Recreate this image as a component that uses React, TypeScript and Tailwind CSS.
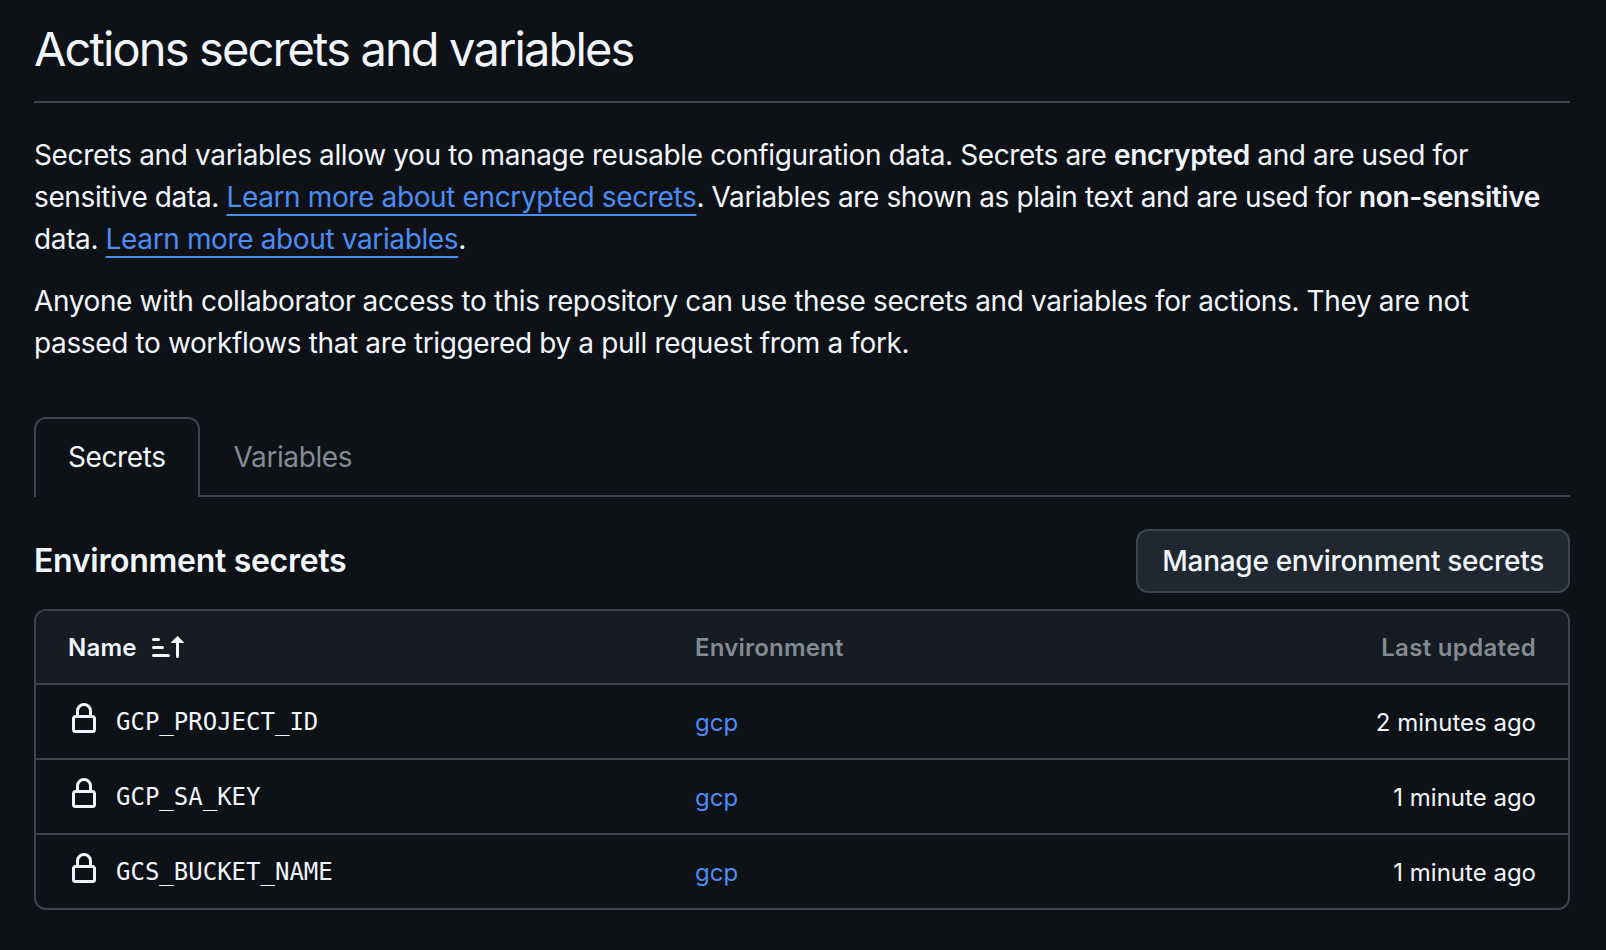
const secrets = [
  { name: 'GCP_PROJECT_ID', updated: '2 minutes ago' },
  { name: 'GCP_SA_KEY', updated: '1 minute ago' },
  { name: 'GCS_BUCKET_NAME', updated: '1 minute ago' },
];

function LockIcon() {
  return (
    <svg viewBox="0 0 16 16" width="32" height="32" fill="currentColor" className="shrink-0 -mt-[6px]">
      <path d="M4 4a4 4 0 0 1 8 0v2h.25c.966 0 1.75.784 1.75 1.75v5.5A1.75 1.75 0 0 1 12.25 15h-8.5A1.75 1.75 0 0 1 2 13.25v-5.5C2 6.784 2.784 6 3.75 6H4Zm8.25 3.5h-8.5a.25.25 0 0 0-.25.25v5.5c0 .138.112.25.25.25h8.5a.25.25 0 0 0 .25-.25v-5.5a.25.25 0 0 0-.25-.25ZM10.5 6V4a2.5 2.5 0 1 0-5 0v2Z" />
    </svg>
  );
}

function SortIcon() {
  return (
    <svg viewBox="0 0 16 16" width="32" height="32" fill="currentColor" className="shrink-0">
      <path d="m12.927 2.573 3 3A.25.25 0 0 1 15.75 6H13.5v6.75a.75.75 0 0 1-1.5 0V6H9.75a.25.25 0 0 1-.177-.427l3-3a.25.25 0 0 1 .354 0ZM0 12.25a.75.75 0 0 1 .75-.75h7.5a.75.75 0 0 1 0 1.5H.75a.75.75 0 0 1-.75-.75Zm0-4a.75.75 0 0 1 .75-.75h4.5a.75.75 0 0 1 0 1.5H.75A.75.75 0 0 1 0 8.25Zm0-4a.75.75 0 0 1 .75-.75h2.5a.75.75 0 0 1 0 1.5H.75A.75.75 0 0 1 0 4.25Z" />
    </svg>
  );
}

function DocLink({ children }: { children: string }) {
  return <a className="text-[#4c8cf5] underline underline-offset-[7px] decoration-2 [text-decoration-skip-ink:none]">{children}</a>;
}

export default function App() {
  return (
    <div className="min-h-[950px] bg-[#0e1116] pl-[34px] pr-[36px] text-[#f0f6fc] font-['Inter',sans-serif] overflow-hidden">
      {/* Header */}
      <div className="h-[103px] border-b-2 border-[#3d444d] pt-[19px]">
        <h1 className="text-[47px] leading-[60px] tracking-[-1.87px]">Actions secrets and variables</h1>
      </div>

      <p className="mt-[31px] text-[28px] leading-[42px] tracking-[-0.37px]">
        Secrets and variables allow you to manage reusable configuration data. Secrets are <b className="font-semibold">encrypted</b> and are used for
        <br />
        sensitive data. <DocLink>Learn more about encrypted secrets</DocLink>. Variables are shown as plain text and are used for <b className="font-semibold whitespace-nowrap">non-sensitive</b>
        <br />
        data. <DocLink>Learn more about variables</DocLink>.
      </p>
      <p className="mt-[20px] text-[28px] leading-[42px] tracking-[-0.37px]">
        Anyone with collaborator access to this repository can use these secrets and variables for actions. They are not
        <br />
        passed to workflows that are triggered by a pull request from a fork.
      </p>

      {/* Tabs */}
      <div className="mt-[53px] flex h-[80px] border-b-2 border-[#3d444d] text-[28px] tracking-[-0.4px]">
        <div className="relative flex h-[80px] items-center rounded-t-[12px] border-2 border-b-0 border-[#3d444d] bg-[#0e1116] px-[32px] pb-[2px]">Secrets</div>
        <div className="flex items-center px-[34px] pt-[2px] text-[#858a93]">Variables</div>
      </div>

      {/* Section heading */}
      <div className="mt-[32px] flex h-[64px] items-center justify-between">
        <h2 className="text-[32px] font-semibold tracking-[-0.3px]">Environment secrets</h2>
        <button className="h-[64px] rounded-[12px] border-2 border-[#3d444d] bg-[#212730] px-[24px] text-[28px] font-medium tracking-[-0.3px]">Manage environment secrets</button>
      </div>

      {/* Table */}
      <div className="mt-[16px] overflow-hidden rounded-[12px] border-2 border-[#3d444d]">
        <div className="flex h-[72px] items-center bg-[#161b24] pl-[32px] pr-[32px] text-[24px] font-semibold tracking-[0.2px]">
          <div className="flex w-[627px] items-center gap-[15px]">
            <span className="mt-[2px]">Name</span>
            <SortIcon />
          </div>
          <div className="mt-[2px] text-[#858a93]">Environment</div>
          <div className="ml-auto mt-[2px] text-[#858a93] tracking-[0.33px]">Last updated</div>
        </div>
        {secrets.map((s) => (
          <div key={s.name} className="flex h-[75px] items-center border-t-2 border-[#3d444d] pl-[32px] pr-[32px] text-[24px]">
            <div className="flex w-[627px] items-center gap-[16px]">
              <LockIcon />
              <span className="font-['DejaVu_Sans_Mono',monospace] text-[24px]">{s.name}</span>
            </div>
            <a className="mt-[2px] text-[#4c8cf5]">gcp</a>
            <div className="ml-auto mt-[2px]">{s.updated}</div>
          </div>
        ))}
      </div>
    </div>
  );
}
